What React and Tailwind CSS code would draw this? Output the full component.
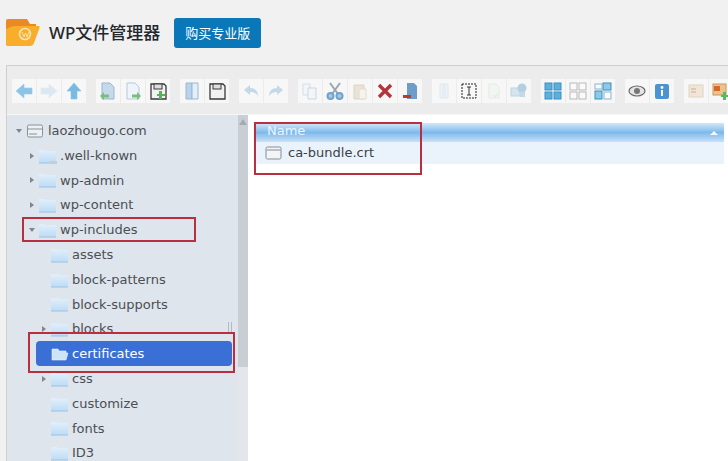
import React from "react";

const Svg = ({ children, className = "" }) => (
  <svg viewBox="0 0 20 20" className={`w-[20px] h-[20px] ${className}`}>
    {children}
  </svg>
);

const Arrow = ({ dir, fill, stroke }) => {
  const rot = dir === "left" ? 0 : dir === "right" ? 180 : 90;
  return (
    <Svg>
      <path
        d="M2 10 L10 3 V7 H18 V13 H10 V17 Z"
        fill={fill}
        stroke={stroke}
        strokeWidth="0.6"
        transform={`rotate(${rot} 10 10)`}
      />
    </Svg>
  );
};

const Doc = ({ fill = "#eef4f9", stroke = "#9fb8cf" }) => (
  <path d="M4 2 H12 L16 6 V18 H4 Z" fill={fill} stroke={stroke} />
);

const Floppy = ({ badge }) => (
  <Svg>
    <path d="M3 3 H16 L18 5 V18 H3 Z" fill="#f2f2f2" stroke="#3a3a3a" strokeWidth="1.3" />
    <rect x="6" y="3" width="8" height="5" fill="#ddd" stroke="#3a3a3a" />
    {badge && <path d="M14 10 V13 H17 V15 H14 V18 H11 V15 H9 V13 H11 V10 Z" fill="#5bb05b" />}
  </Svg>
);

const Grid4 = ({ fill, stroke }) => (
  <Svg>
    <rect x="2" y="2" width="7" height="7" fill={fill} stroke={stroke} />
    <rect x="11" y="2" width="7" height="7" fill={fill} stroke={stroke} />
    <rect x="2" y="11" width="7" height="7" fill={fill} stroke={stroke} />
    <rect x="11" y="11" width="7" height="7" fill={fill} stroke={stroke} />
  </Svg>
);

const icons = [
  [
    <Arrow dir="left" fill="#8cc4e8" stroke="#9cc9e6" />,
    <Arrow dir="right" fill="#dbe8f2" stroke="#e1ebf3" />,
    <Arrow dir="up" fill="#7ab9e0" stroke="#8cc2e4" />,
  ],
  [
    <Svg>
      <Doc fill="#c6d9ea" stroke="#9db6cf" />
      <path d="M2 15 L6 11 V13.5 H11 V16.5 H6 V19 Z" fill="#7cbd7c" />
    </Svg>,
    <Svg>
      <Doc stroke="#b5c9da" />
      <path d="M18 15 L14 11 V13.5 H9 V16.5 H14 V19 Z" fill="#7cbd7c" />
    </Svg>,
    <Floppy badge />,
  ],
  [
    <Svg>
      <path d="M4 2 H10 V18 H4 Z" fill="#b9d3ea" stroke="#98b8d4" />
      <path d="M10 2 H16 V18 H10 Z" fill="#e3eef7" stroke="#98b8d4" />
    </Svg>,
    <Floppy />,
  ],
  [
    <Svg>
      <path d="M3 9 L9 4 V7 C14 7 17 10 17 15 C15 12 13 11 9 11 V14 Z" fill="#c2d9ea" />
    </Svg>,
    <Svg>
      <path d="M17 9 L11 4 V7 C6 7 3 10 3 15 C5 12 7 11 11 11 V14 Z" fill="#c2d9ea" />
    </Svg>,
  ],
  [
    <Svg>
      <path d="M3 3 H10 V14 H3 Z" fill="#f2f6f9" stroke="#d2dee7" />
      <path d="M8 7 H16 V18 H8 Z" fill="#f2f6f9" stroke="#c8d7e2" />
    </Svg>,
    <Svg>
      <path d="M5 2 L13 13 M15 2 L7 13" stroke="#9aa8b4" strokeWidth="2" />
      <circle cx="5.5" cy="15" r="3" fill="#a9c8e0" stroke="#6fa2cc" strokeWidth="2" />
      <circle cx="14.5" cy="15" r="3" fill="#a9c8e0" stroke="#6fa2cc" strokeWidth="2" />
    </Svg>,
    <Svg>
      <path d="M4 4 H14 V18 H4 Z" fill="#e9e3d6" stroke="#ddd5c5" />
      <path d="M9 8 H16 V18 H9 Z" fill="#f6f3ec" stroke="#e2dccf" />
    </Svg>,
    <Svg>
      <path d="M4 4 L16 16 M16 4 L4 16" stroke="#b5343c" strokeWidth="3.4" />
    </Svg>,
    <Svg>
      <path d="M7 2 H14 L17 5 V18 H7 Z" fill="#6e9dca" />
      <rect x="3" y="14" width="8" height="3" fill="#c0392b" />
    </Svg>,
  ],
  [
    <Svg>
      <path d="M6 3 H14 V17 H6 Z" fill="#eef3f7" stroke="#e0e8ee" />
      <path d="M9 3 V17 M11 3 V17" stroke="#e0e8ee" />
    </Svg>,
    <Svg>
      <rect x="3" y="3" width="14" height="14" fill="none" stroke="#222" strokeDasharray="2 1" />
      <path d="M8 6 H12 M10 6 V14 M8 14 H12" stroke="#333" fill="none" />
    </Svg>,
    <Svg>
      <path d="M5 3 H12 L15 6 V17 H5 Z" fill="#f2f6f3" stroke="#e3eae5" />
      <path d="M14 12 L11 16 L10 14" stroke="#dbe9db" fill="none" />
    </Svg>,
    <Svg>
      <rect x="2" y="7" width="9" height="8" fill="#d5e4ee" stroke="#bfd2e0" />
      <circle cx="13" cy="7" r="4.5" fill="#b3cfe2" />
      <rect x="11" y="11" width="5" height="5" fill="#c4d8e6" />
    </Svg>,
  ],
  [
    <Grid4 fill="#5cb0dc" stroke="#3a8fc0" />,
    <Grid4 fill="#fafafa" stroke="#b9b9b9" />,
    <Svg>
      <rect x="2" y="10" width="7" height="8" fill="#8ccbe8" stroke="#3a8fc0" />
      <rect x="10" y="2" width="8" height="7" fill="#8ccbe8" stroke="#3a8fc0" />
      <rect x="2" y="3" width="7" height="5" fill="#fafafa" stroke="#8ab4cf" />
      <rect x="11" y="11" width="7" height="7" fill="#fafafa" stroke="#8ab4cf" />
    </Svg>,
  ],
  [
    <Svg>
      <ellipse cx="10" cy="10" rx="8" ry="5" fill="#e4e4e4" stroke="#666" strokeWidth="1.2" />
      <circle cx="10" cy="10" r="3" fill="#777" />
    </Svg>,
    <Svg>
      <rect x="3" y="3" width="14" height="15" rx="2" fill="#4b94d4" />
      <circle cx="10" cy="6.5" r="1.4" fill="#fff" />
      <rect x="9" y="9" width="2" height="6" fill="#fff" />
    </Svg>,
  ],
  [
    <Svg>
      <rect x="3" y="4" width="14" height="12" fill="#efe6da" stroke="#e0d4c4" />
      <path d="M5 8 H10 M5 11 H10" stroke="#dca88c" />
    </Svg>,
    <Svg>
      <rect x="2" y="3" width="13" height="11" fill="#e9c48c" stroke="#c79a5c" />
      <rect x="3" y="5" width="6" height="5" fill="#d9662f" />
      <path d="M15 11 V14 H18 V16 H15 V19 H12 V16 H10 V14 H12 V11 Z" fill="#5cb85c" />
    </Svg>,
  ],
];

const Folder = ({ dim, open }) => (
  <svg viewBox="0 0 18 16" className="w-[18px] h-[16px] shrink-0 mr-[3px]">
    <defs>
      <linearGradient id="fold" x1="0" y1="0" x2="0" y2="1">
        <stop offset="0" stopColor="#e2effa" />
        <stop offset="1" stopColor="#bcdcf6" />
      </linearGradient>
    </defs>
    {open ? (
      <path d="M1 3 H7 L8 5 H15 V7 H17 L15 14 H1 Z" fill="#cfe3f7" stroke="#e8f1fb" strokeWidth="0.6" />
    ) : (
      <path d="M0 2 H6 L7 3 H17 V15 H0 Z" fill="url(#fold)" />
    )}
    {!open && <path d="M0 15 H17" stroke="#9cc3e4" />}
    {dim && <path d="M11 13 H18 V16 H11 Z" fill="#c9cdd2" />}
  </svg>
);

const Caret = ({ open }) => (
  <span className="w-[9px] h-[9px] flex items-center justify-center shrink-0">
    {open ? (
      <span className="border-x-[3.5px] border-x-transparent border-t-[4px] border-t-[#7d8790]" />
    ) : (
      <span className="border-y-[3.5px] border-y-transparent border-l-[4px] border-l-[#7d8790]" />
    )}
  </span>
);

const rows = [
  { name: ".well-known", pad: "pl-[20px]", caret: "closed", dim: true },
  { name: "wp-admin", pad: "pl-[20px]", caret: "closed" },
  { name: "wp-content", pad: "pl-[20px]", caret: "closed" },
  { name: "wp-includes", pad: "pl-[20px]", caret: "open" },
  { name: "assets", pad: "pl-[44px]" },
  { name: "block-patterns", pad: "pl-[44px]" },
  { name: "block-supports", pad: "pl-[44px]" },
  { name: "blocks", pad: "pl-[32px]", caret: "closed" },
  { name: "certificates", selected: true },
  { name: "css", pad: "pl-[32px]", caret: "closed" },
  { name: "customize", pad: "pl-[44px]" },
  { name: "fonts", pad: "pl-[44px]" },
  { name: "ID3", pad: "pl-[44px]" },
];

const TreeRow = ({ row }) => {
  if (row.selected) {
    return (
      <div className="h-[24.8px] pl-[29px] pr-[6px] flex items-center">
        <div className="h-[25px] w-full bg-[#3a70d6] rounded-[4px] flex items-center pl-[15px] text-white">
          <Folder open />
          {row.name}
        </div>
      </div>
    );
  }
  return (
    <div className={`h-[24.8px] flex items-center text-[#4a4f55] ${row.pad}`}>
      {row.caret && <Caret open={row.caret === "open"} />}
      {row.caret && <span className="w-[3px]" />}
      <Folder dim={row.dim} />
      {row.name}
    </div>
  );
};

const App = () => {
  return (
    <div className="relative w-[728px] h-[461px] overflow-hidden bg-[#f1f1f1] font-['DejaVu_Sans',sans-serif] text-[13px]">
      {/* Header */}
      <div className="flex items-center h-[30px] mt-[18px] pl-[6px]">
        <svg viewBox="0 0 34 28" className="w-[34px] h-[28px] mr-[9px]">
          <path d="M0 2 Q0 0 2 0 H21 L24 5 H30 V10 H0 Z" fill="#ea8a24" />
          <path d="M0 26 V10 Q6 7 10 7 H33 Q34 7 33.5 9 L28 24 Q27 27 24 27 H1 Z" fill="#f9ae2b" />
          <circle cx="19" cy="15" r="5.5" fill="none" stroke="#fde3b0" strokeWidth="1.6" />
          <path d="M16 13 L18 18 L19.5 14 L21 18 L23 13" stroke="#fde3b0" fill="none" />
        </svg>
        <span className="text-[17px] font-medium text-[#23282d] font-['Noto_Sans','Noto_Sans_CJK_SC',sans-serif] mr-[14px]">
          WP文件管理器
        </span>
        <button className="w-[87px] h-[30px] bg-[#0a78b8] rounded-[3px] text-white text-[13px] font-['Noto_Sans_CJK_SC',sans-serif]">
          购买专业版
        </button>
      </div>

      {/* File manager */}
      <div className="mt-[17px] ml-[6px] h-[396px] border-l border-t border-[#cfcfcf] flex flex-col">
        {/* Toolbar */}
        <div className="h-[48px] shrink-0 bg-[#ececec] flex items-center gap-[10px] pl-[5px] pt-[1px]">
          {icons.map((group, i) => (
            <div key={i} className="flex gap-[1px] shrink-0">
              {group.map((icon, j) => (
                <div key={j} className="w-[24px] h-[24px] bg-[#f7f7f7] flex items-center justify-center">
                  {icon}
                </div>
              ))}
            </div>
          ))}
        </div>

        {/* Body */}
        <div className="flex-1 flex border-t border-[#f7f7f7] min-h-0">
          {/* Tree */}
          <div className="w-[231px] shrink-0 bg-[#dfe5ec] pt-[3.4px] overflow-hidden">
            <div className="h-[24.8px] flex items-center pl-[7px] text-[#4a4f55]">
              <Caret open />
              <svg viewBox="0 0 16 14" className="w-[16px] h-[14px] ml-[4px] mr-[5px]">
                <rect x="0.5" y="1" width="15" height="12" rx="1.5" fill="#eef1f4" stroke="#8a9198" />
                <path d="M1 5 H15" stroke="#8a9198" />
                <rect x="2" y="9" width="8" height="2" fill="#b9c0c7" />
              </svg>
              laozhougo.com
            </div>
            {rows.map((row) => (
              <TreeRow key={row.name} row={row} />
            ))}
          </div>

          {/* Scrollbar */}
          <div className="w-[10px] shrink-0 flex flex-col bg-[#e3e7ec]">
            <div className="h-[252px] bg-[#c9ced5] flex justify-center pt-[4px]">
              <span className="h-0 border-x-[4px] border-x-transparent border-b-[6px] border-b-[#a3aab2]" />
            </div>
          </div>

          {/* File list */}
          <div className="flex-1 bg-white pt-[8px] pl-[6px]">
            <div className="h-[19px] mr-[4px] pb-[4px] bg-gradient-to-b from-[#d3e7f8] via-[#7dbaec] to-[#c8e1f7] flex items-center justify-between pl-[13px] pr-[6px] text-[#eaf3fb]">
              Name
              <span className="h-0 border-x-[4px] border-x-transparent border-b-[4px] border-b-[#f4f9fd] mt-[4px]" />
            </div>
            <div className="h-[22px] mr-[4px] bg-[#eaf3fc] flex items-center pl-[11px] text-[#3c4146]">
              <svg viewBox="0 0 16 14" className="w-[17px] h-[14px] mr-[6px]">
                <rect x="0.5" y="1" width="15" height="12" rx="1.5" fill="#f2f4f6" stroke="#868d94" />
                <path d="M1 4 H15" stroke="#868d94" />
              </svg>
              ca-bundle.crt
            </div>
          </div>
        </div>
      </div>

      {/* Tree resize handle */}
      <div className="absolute left-[228px] top-[322px] w-[4px] h-[10px] border-x border-[#b4bac1]" />

      {/* Red annotation boxes */}
      <div className="absolute left-[254px] top-[122px] w-[168px] h-[53px] border-2 border-[#b8303f]" />
      <div className="absolute left-[22px] top-[217px] w-[174px] h-[25px] border-2 border-[#b8303f]" />
      <div className="absolute left-[28px] top-[332px] w-[207px] h-[41px] border-2 border-[#b8303f]" />
    </div>
  );
};

export default App;
